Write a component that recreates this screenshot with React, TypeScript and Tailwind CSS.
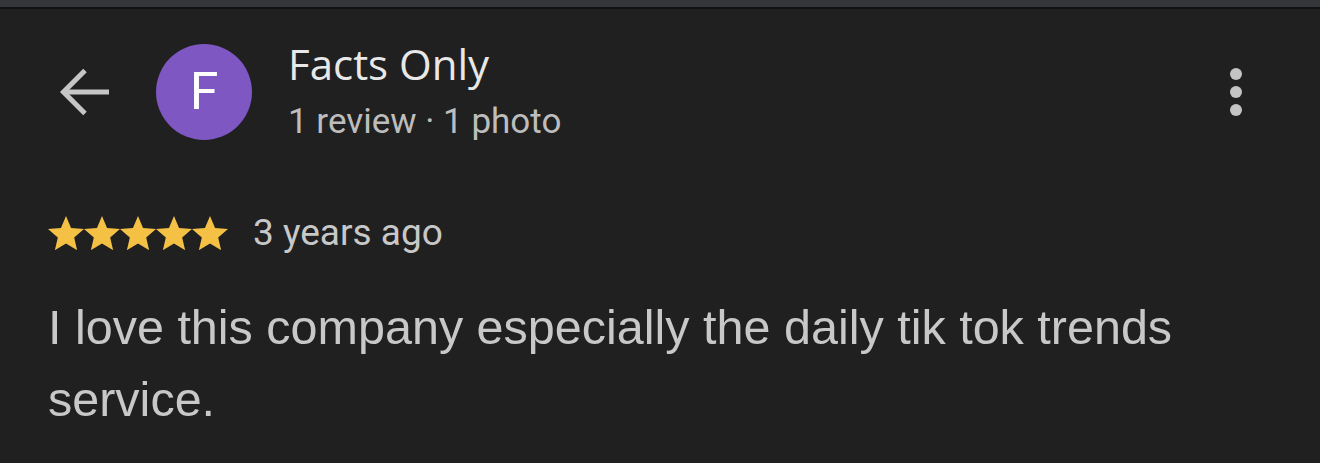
export default function App() {
  return (
    <div className="w-[1320px] h-[463px] bg-[#202020] overflow-hidden flex flex-col">
      {/* top strip */}
      <div className="h-[7px] bg-[#35363a] shrink-0" />
      <div className="h-[2px] bg-[#111111] shrink-0" />

      {/* header */}
      <div className="flex items-start pt-[28px] pl-[58px] pr-[78px] shrink-0">
        <div className="mt-[29px] w-[52px] h-[52px] flex items-center justify-center text-[#c6c6c6]">
          <svg width="52" height="52" viewBox="0 0 52 52" fill="none" stroke="currentColor" strokeWidth="5">
            <path d="M5 26H51" />
            <path d="M27 4.5L5.5 26L27 47.5" />
          </svg>
        </div>
        <div className="ml-[46px] mt-[7px] w-[96px] h-[96px] rounded-full bg-[#7e57c2] flex items-center justify-center text-white text-[52px] leading-none font-[Roboto,sans-serif]">
          F
        </div>
        <div className="ml-[36px] mt-[1px] flex flex-col">
          <div className="text-[42px] leading-[52px] text-[#e8e8e8] font-['Open_Sans',sans-serif]">Facts Only</div>
          <div className="text-[35px] leading-[40px] text-[#bdbdbd] mt-[12px] font-[Roboto,sans-serif]">1 review · 1 photo</div>
        </div>
        <div className="ml-auto mt-[31px] flex flex-col items-center gap-[6px]">
          <span className="w-[12px] h-[12px] rounded-full bg-[#c4c4c4]" />
          <span className="w-[12px] h-[12px] rounded-full bg-[#c4c4c4]" />
          <span className="w-[12px] h-[12px] rounded-full bg-[#c4c4c4]" />
        </div>
      </div>

      {/* rating row */}
      <div className="flex items-center pl-[48px] mt-[71px] h-[40px] shrink-0">
        <div className="flex">
          {[0, 1, 2, 3, 4].map((i) => (
            <svg key={i} width="36" height="34.2" viewBox="2 2 20 19" fill="#f5c145">
              <path d="M12 17.27L18.18 21l-1.64-7.03L22 9.24l-7.19-.61L12 2 9.19 8.63 2 9.24l5.46 4.73L5.82 21z" />
            </svg>
          ))}
        </div>
        <div className="ml-[25px] text-[37px] leading-[40px] text-[#c8c8c8] font-[Roboto,sans-serif]">3 years ago</div>
      </div>

      {/* review text */}
      <div className="pl-[48px] pr-[120px] mt-[38px] text-[48.5px] leading-[72px] text-[#c8c8c8] font-['Liberation_Sans',Arial,sans-serif]">
        I love this company especially the daily tik tok trends service.
      </div>
    </div>
  );
}
